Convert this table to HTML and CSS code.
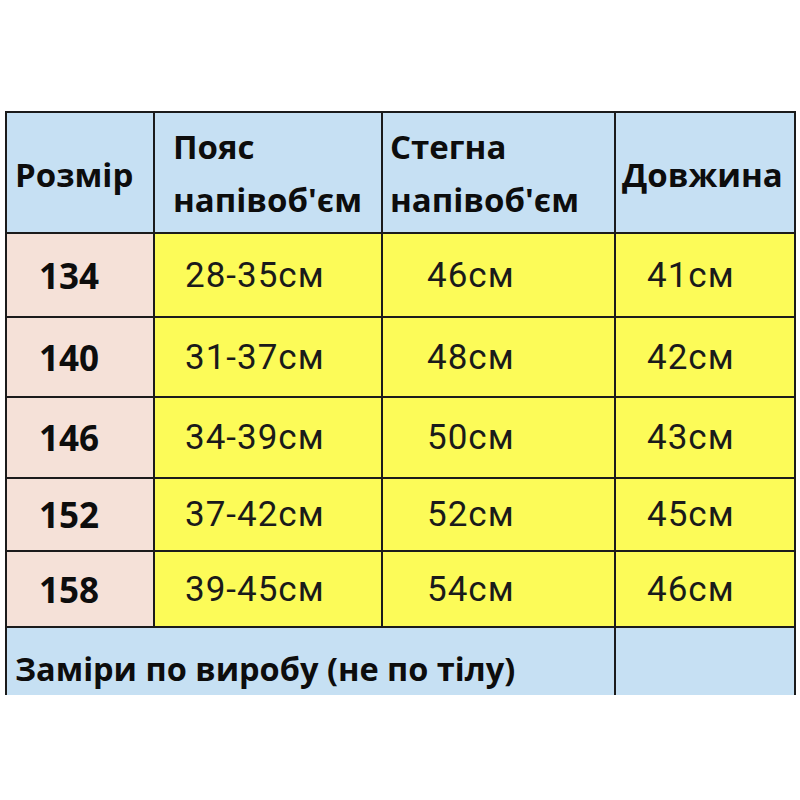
FILE: index.html
```html
<!DOCTYPE html>
<html lang="uk">
<head>
<meta charset="utf-8">
<title>Розмірна сітка</title>
<link rel="stylesheet" href="styles.css">
</head>
<body>
<div class="page">
  <div class="table">
    <div class="cell head c1"><span>Розмір</span></div>
    <div class="cell head c2 two"><span>Пояс<br>напівоб'єм</span></div>
    <div class="cell head c3 two"><span>Стегна<br>напівоб'єм</span></div>
    <div class="cell head c4"><span>Довжина</span></div>

    <div class="cell size">134</div>
    <div class="cell val v2">28-35см</div>
    <div class="cell val v3">46см</div>
    <div class="cell val v4">41см</div>

    <div class="cell size">140</div>
    <div class="cell val v2">31-37см</div>
    <div class="cell val v3">48см</div>
    <div class="cell val v4">42см</div>

    <div class="cell size">146</div>
    <div class="cell val v2">34-39см</div>
    <div class="cell val v3">50см</div>
    <div class="cell val v4">43см</div>

    <div class="cell size">152</div>
    <div class="cell val v2">37-42см</div>
    <div class="cell val v3">52см</div>
    <div class="cell val v4">45см</div>

    <div class="cell size">158</div>
    <div class="cell val v2">39-45см</div>
    <div class="cell val v3">54см</div>
    <div class="cell val v4">46см</div>

    <div class="cell foot">Заміри по виробу (не по тілу)</div>
    <div class="cell foot-empty"></div>
  </div>
</div>
</body>
</html>
```
FILE: styles.css
```css
html, body {
  margin: 0;
  padding: 0;
  background: #ffffff;
}

.page {
  padding: 111px 4px 0 5px;
  font-family: Roboto, "Noto Sans", sans-serif;
  color: #111;
}

.table {
  width: 791px;
  height: 584px;
  overflow: hidden;
  box-sizing: border-box;
  background: #1b1b1b;
  padding: 2px 2px 0 2px;
  display: grid;
  grid-template-columns: 146px 226px 231px 178px;
  grid-template-rows: 119px 82px 78px 79px 71px 74px 80px;
  gap: 2px;
}

.cell {
  display: flex;
  align-items: center;
  box-sizing: border-box;
}

.head,
.size,
.foot {
  font-family: "Open Sans", Roboto, sans-serif;
  font-weight: 700;
  font-size: 33px;
  color: #0d0d0d;
}

.head {
  background: #c6e0f3;
}

.head.two {
  line-height: 53px;
}

.c1 { padding-left: 8px; padding-top: 4px; }
.c2 { padding-left: 18px; }
.c3 { padding-left: 7px; }
.c4 { padding-left: 6px; padding-top: 4px; }

.size {
  background: #f5e1d8;
  font-size: 35px;
  padding-left: 32px;
}

.val {
  background: #fcfb58;
  font-size: 35px;
  letter-spacing: 1px;
  color: #1a1a1a;
}

.v2 { padding-left: 30px; }
.v3 { padding-left: 44px; }
.v4 { padding-left: 31px; }

.foot {
  grid-column: 1 / span 3;
  background: #c6e0f3;
  font-size: 32.5px;
  padding-left: 8px;
  padding-top: 0;
}

.foot-empty {
  background: #c6e0f3;
}
```
